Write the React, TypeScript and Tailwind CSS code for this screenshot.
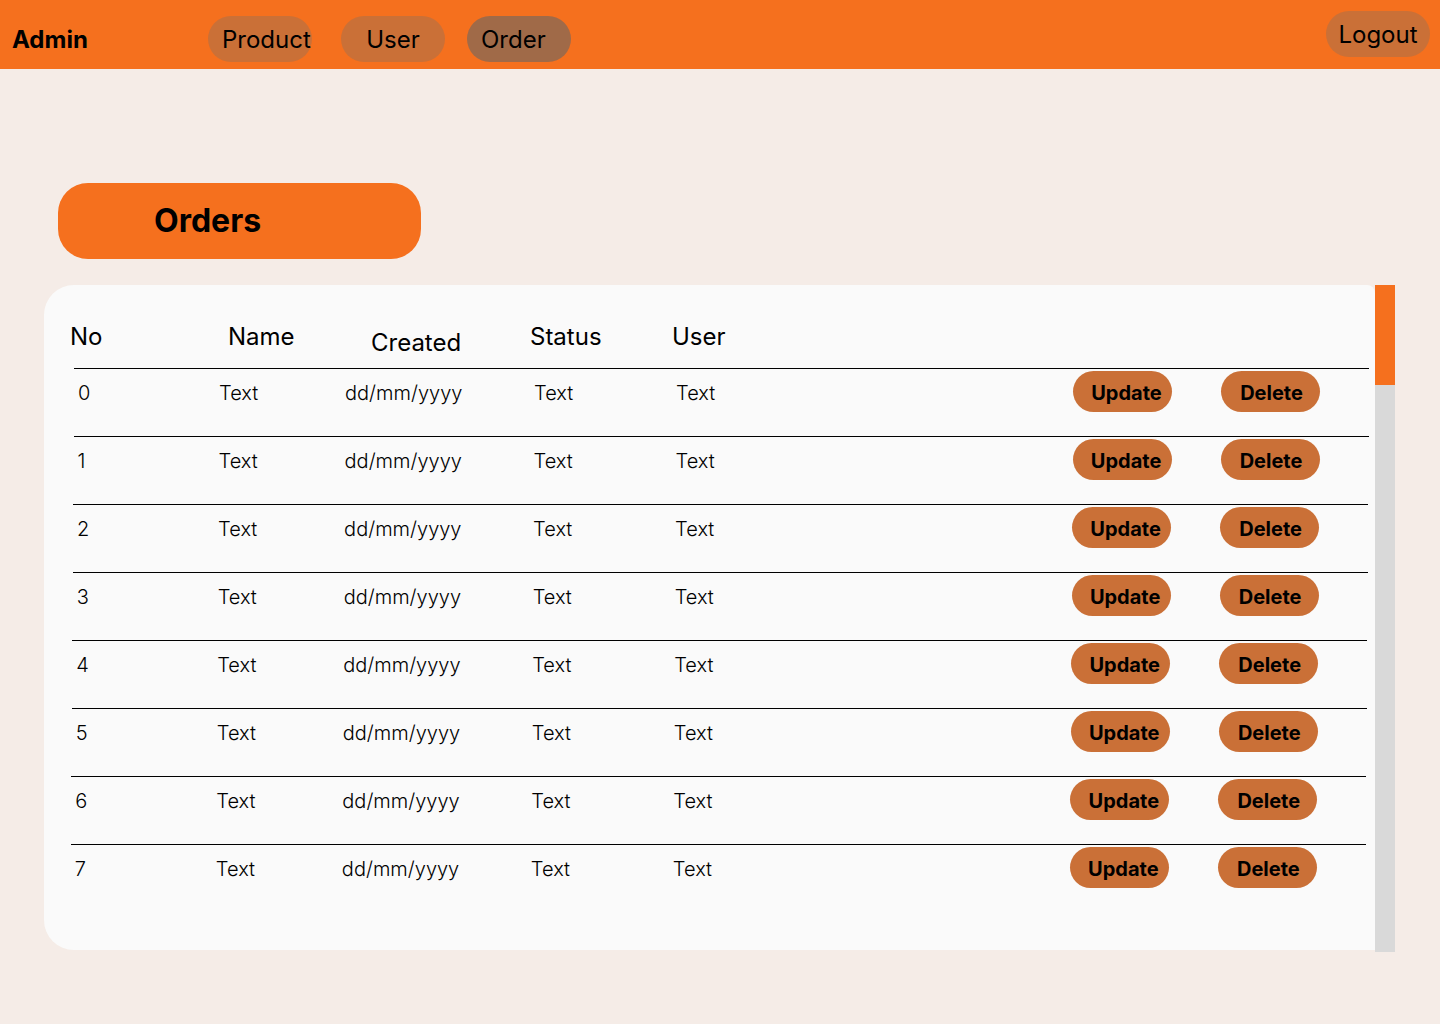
import React from 'react';

const rows = [0, 1, 2, 3, 4, 5, 6, 7];

export default function App() {
    return (
        <div className="min-h-[1024px] w-[1440px] bg-[#F5ECE7] font-['Inter',sans-serif] text-black">
            {/* HEADER */}
            <header className="h-[69px] bg-[#F5701E] flex items-center pl-3 pr-[10px]">
                <span className="text-[24px] font-bold w-[196px] mt-[10px]">Admin</span>
                <div className="flex items-center mt-[8px]">
                    <NavPill label="Product" className="bg-[#CA7037] justify-start pl-[14px]" />
                    <NavPill label="User" className="bg-[#CA7037] justify-center ml-[29px]" />
                    <NavPill label="Order" className="bg-[#A06A48] justify-start pl-[14px] ml-[22px]" />
                </div>
                <button className="ml-auto mb-[2px] pt-[2px] h-[46px] w-[104px] rounded-[23px] bg-[#CA7037] text-[24px] flex items-center justify-center">
                    Logout
                </button>
            </header>

            {/* TITULO */}
            <div className="pt-[114px] pl-[58px]">
                <div className="w-[363px] h-[76px] rounded-[30px] bg-[#F5701E] flex items-center pl-[96px]">
                    <h1 className="text-[32px] font-bold">Orders</h1>
                </div>
            </div>

            {/* TABELA */}
            <div className="flex items-start pl-[44px] mt-[26px]">
                <div className="w-[1331px] h-[665px] bg-[#FAFAFA] rounded-l-[30px] rounded-tr-[8px]">
                    <div className="h-[83px] flex items-start pl-[26px] pt-[34px] text-[24px]">
                        <span className="w-[158px]">No</span>
                        <span className="w-[143px]">Name</span>
                        <span className="w-[159px] mt-[6px]">Created</span>
                        <span className="w-[142px]">Status</span>
                        <span>User</span>
                    </div>
                    {rows.map((i) => (
                        <div
                            key={i}
                            className="w-[1295px] h-[68px] border-t border-black pt-[2px]"
                            style={{ marginLeft: 30 - i * 0.45 }}
                        >
                            <div className="flex items-center h-[44px] w-full text-[20px] font-light">
                                <span className="w-[145px] pl-1">{i}</span>
                                <span className="w-[126px]">Text</span>
                                <span className="w-[189px]">dd/mm/yyyy</span>
                                <span className="w-[142px]">Text</span>
                                <span className="w-[397px]">Text</span>
                                <ActionButton label="Update" className="pl-[8px]" />
                                <div className="w-[49px]" />
                                <ActionButton label="Delete" className="pl-[2px]" />
                            </div>
                        </div>
                    ))}
                </div>
                {/* SCROLLBAR */}
                <div className="w-[20px] h-[667px] bg-[#D9D9D9]">
                    <div className="h-[100px] bg-[#F5701E]" />
                </div>
            </div>
        </div>
    );
}

function NavPill({ label, className }: { label: string; className: string }) {
    return (
        <button className={`h-[46px] w-[104px] pt-[2px] rounded-[23px] text-[24px] whitespace-nowrap flex items-center ${className}`}>
            {label}
        </button>
    );
}

function ActionButton({ label, className }: { label: string; className: string }) {
    return (
        <button className={`w-[99px] h-[41px] mb-[3px] pt-[3px] rounded-[21px] bg-[#CA7037] text-[20px] font-bold flex items-center justify-center ${className}`}>
            {label}
        </button>
    );
}
